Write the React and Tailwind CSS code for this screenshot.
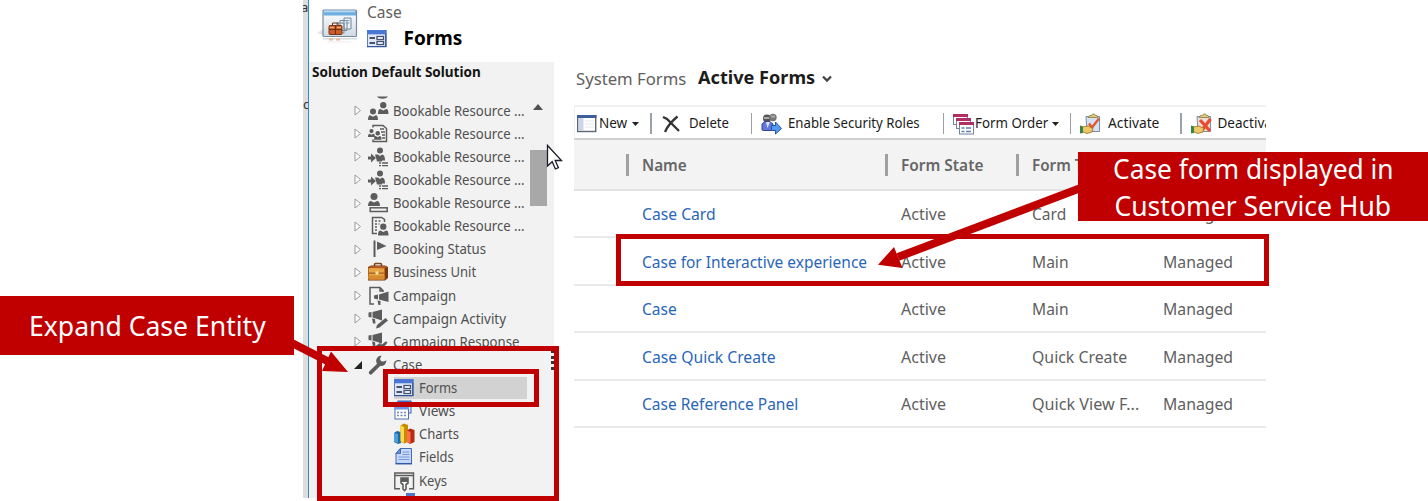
import React, { useLayoutEffect, useRef, useState } from "react";

// Text run stretched to an exact measured width.
function Fit({ w, className = "", children }) {
  const ref = useRef(null);
  const [s, setS] = useState(1);
  useLayoutEffect(() => {
    const n = ref.current.offsetWidth;
    if (n) setS(w / n);
  }, [w]);
  return (
    <span className={"block shrink-0 whitespace-nowrap " + className} style={{ width: w }}>
      <span ref={ref} className="inline-block origin-left" style={{ transform: `scaleX(${s})` }}>
        {children}
      </span>
    </span>
  );
}

const G = "#5c5c5c";

function Person({ x, y, k = 1 }) {
  return (
    <g transform={`translate(${x} ${y}) scale(${k})`} fill={G}>
      <circle cx="5" cy="3" r="3" />
      <path d="M0 11.500c0-3 .7-4.800 2.200-4.800L5 8.200l2.800-1.500C9.300 6.700 10 8.500 10 11.500z" />
    </g>
  );
}

function Svg({ children, w = 20, h = 20 }) {
  return (
    <svg width={w} height={h} viewBox={`0 0 ${w} ${h}`} className="shrink-0 overflow-visible">
      {children}
    </svg>
  );
}

const People = () => (
  <Svg>
    <path d="M9-4.500h11c-2 3-9 3-11 0z" fill={G} />
    <Person x={0} y={7.500} k={1} />
    <Person x={10} y={1} k={1.050} />
  </Svg>
);
const PeopleDoc = () => (
  <Svg>
    <path d="M5 3.500V1.500h10l3.500 3v13H5v-2" fill="none" stroke={G} strokeWidth="1.500" />
    <path d="M12 5h4M13 8h4M14 11h3M14 14h3" stroke={G} strokeWidth="1.300" />
    <Person x={0} y={5} k={0.7} />
    <Person x={6} y={7} k={0.75} />
  </Svg>
);
const PersonArrow = () => (
  <Svg>
    <path d="M0 9.500h3v-3l5 4.500-5 4.500v-3H0z" fill={G} />
    <circle cx="12" cy="3.500" r="3" fill={G} />
    <path d="M7 7.500h3l2 1.500L14 7.500c2 0 3 2 3 6h-3v1H9z" fill={G} />
    <path d="M11 16h2m1 0h6M11 18.700h2m1 0h6" stroke={G} strokeWidth="1.300" />
  </Svg>
);
const PersonBox = () => (
  <Svg>
    <circle cx="6" cy="3.500" r="3.500" fill={G} />
    <path d="M0 13c0-3 1-5 3-5L6 9.500 9 8c2 0 3 2 3 5z" fill={G} />
    <rect x="2.200" y="14.800" width="17" height="3.700" fill="none" stroke={G} strokeWidth="1.500" />
  </Svg>
);
const BuildingPerson = () => (
  <Svg>
    <path d="M9 17.500H4.500V1.500h9l3 2V6" fill="none" stroke={G} strokeWidth="1.500" />
    <path d="M7 5h2m1.500 0h2M7 8h2m1.500 0h1M7 11h2M7 14h2" stroke={G} strokeWidth="1.500" />
    <Person x={10} y={7.500} k={1.050} />
  </Svg>
);
const Flag = () => (
  <Svg>
    <path d="M6.500 1.500v16.500" stroke={G} strokeWidth="2" />
    <path d="M9 2.500l9.500 4.500L9 11z" fill={G} />
  </Svg>
);
const Briefcase = () => (
  <Svg>
    <path d="M6.500 5V2.500q0-1 1-1h5q1 0 1 1V5" fill="none" stroke="#7a4318" strokeWidth="1.600" />
    <path d="M0 5l3-1.500h14L20 5v11l-3 2.500H0z" fill="#7c3711" />
    <path d="M.5 6h16v11.500H.5z" fill="#e7a344" />
    <path d="M0 5.500l3-1.500h14l2.500 1-3 1.500z" fill="#b45a20" />
    <path d="M.5 10.500h16v1.300H.5z" fill="#a85e1c" />
    <path d="M.5 13.500h16v4H.5z" fill="#d88a31" />
    <path d="M7.500 9.500h3v3h-3z" fill="#fbe3a0" />
  </Svg>
);
const Campaign = () => (
  <Svg>
    <path d="M6 18H2V1.500h10l3 3V6M12 1.500V5h3" fill="none" stroke={G} strokeWidth="1.500" />
    <path d="M6 9.500l4-1v5l-4-1zM11 8.500l9.500-3v10.500L11 13.500z" fill={G} />
    <path d="M9.500 14.500l3 .5v4h-2z" fill={G} />
  </Svg>
);
const Horn = ({ pencil }) => (
  <Svg>
    <path d="M.5 3.500L3.500 3v5.500l-3-.5zM4.500 3L14 .5v11L4.500 8.500z" fill={G} />
    <path d="M4 9.500l3 .5.5 4.500H5z" fill={G} />
    {pencil ? (
      <path d="M8 19.500l1-3.500 8.500-7L20 11.500l-8.500 7z" fill={G} />
    ) : (
      <path d="M19.500 10q-2 5-7 6v2.500L7 14.500l5.500-4v2q3-.5 5-3z" fill={G} />
    )}
  </Svg>
);
const Wrench = () => (
  <Svg>
    <path d="M2.700 17.700L12 8.500" stroke={G} strokeWidth="3.800" strokeLinecap="round" />
    <path d="M18.300 5.300A5.100 5.100 0 1 1 13.700.8L11.900 3.700l1.200 2.600 2.900.3z" fill={G} />
  </Svg>
);
const FormsIcon = () => (
  <Svg>
    <rect x=".5" y="1.500" width="18.500" height="16" fill="#dfe7f6" stroke="#5b7dbd" />
    <rect x="0" y="1" width="19.500" height="4.300" fill="#4a76d4" />
    <path d="M18.800 5v13M0 17.600h19.500" stroke="#34559a" strokeWidth="1.400" />
    <path d="M2.500 9h5.500M2.500 14h5.500" stroke="#42536f" strokeWidth="1.800" />
    <rect x="10" y="7.500" width="6.500" height="3" fill="#fff" stroke="#42536f" strokeWidth="1.300" />
    <rect x="10" y="12.500" width="6.500" height="3" fill="#fff" stroke="#42536f" strokeWidth="1.300" />
  </Svg>
);
const ViewsIcon = () => (
  <Svg>
    <rect x="4" y="0" width="13" height="12" fill="#dce8fb" stroke="#3f66b3" />
    <path d="M3.500 0h14v4h-14z" fill="#3f6fd2" />
    <rect x="1" y="5.500" width="13.500" height="12.500" fill="#fff" stroke="#4c70b5" />
    <path d="M.5 5h14.500v3.500H.5z" fill="#6e98e5" />
    <path d="M3 11.500h2m1.500 0h2m1.500 0h2M3 14.500h2m1.500 0h2m1.500 0h2" stroke="#6f86b5" strokeWidth="1.500" />
  </Svg>
);
const ChartsIcon = () => (
  <Svg>
    <path d="M0 9l3-2 4 1v11l-3 1-4-2z" fill="#1d69ac" />
    <path d="M0 9l4 1v9l-4-1.500z" fill="#4ba0df" />
    <path d="M6.500 1.500L10-.5l4 1.500v17l-4 1.500-3.500-2z" fill="#c78b06" />
    <path d="M6.500 1.500L10 3v16l-3.500-2z" fill="#ffdc45" />
    <path d="M13 6.500l3-2 4.500 1.500v12L16 20l-3-2z" fill="#b72a13" />
    <path d="M13 6.500L16.500 8v11.500L13 18z" fill="#ff704b" />
  </Svg>
);
const FieldsIcon = () => (
  <Svg>
    <path d="M6 1.500h11.500v15H2v-10z" fill="#c8d9f8" stroke="#426ab9" />
    <path d="M6.500 1.500v5H2z" fill="#6e94dc" stroke="#426ab9" />
    <path d="M8.500 5h7M8.500 7.500h7M4.500 10h11M4.500 12.500h11" stroke="#7898d8" />
    <path d="M1.500 16.700h16.500" stroke="#315ba9" strokeWidth="1.500" />
  </Svg>
);
const KeysIcon = () => (
  <Svg>
    <path d="M6 17.800H.8V2h18.700v15.800H15M.8 4.500h18.700" fill="none" stroke={G} strokeWidth="1.400" />
    <path d="M7 7h7v5l-2 1.500v4.500l-1.500 1.500L9 18v-4.500L7 12z" fill="#fff" stroke={G} strokeWidth="1.600" />
    <path d="M7 7h7v4H7z" fill={G} />
  </Svg>
);

const tree = [
  ["Bookable Resource ...", 132, People],
  ["Bookable Resource ...", 132, PeopleDoc],
  ["Bookable Resource ...", 132, PersonArrow],
  ["Bookable Resource ...", 132, PersonArrow],
  ["Bookable Resource ...", 132, PersonBox],
  ["Bookable Resource ...", 132, BuildingPerson],
  ["Booking Status", 93, Flag],
  ["Business Unit", 83, Briefcase],
  ["Campaign", 63, Campaign],
  ["Campaign Activity", 113, () => <Horn pencil />],
  ["Campaign Response", 126, () => <Horn />],
];
const children = [
  ["Forms", 38, FormsIcon],
  ["Views", 36, ViewsIcon],
  ["Charts", 40, ChartsIcon],
  ["Fields", 35, FieldsIcon],
  ["Keys", 28, KeysIcon],
];
const rows = [
  ["Case Card", 73.5, "Card", 34],
  ["Case for Interactive experience", 225.5, "Main", 37],
  ["Case", 35, "Main", 37],
  ["Case Quick Create", 133.5, "Quick Create", 95],
  ["Case Reference Panel", 156, "Quick View F...", 107],
];

function CaseIcon() {
  return (
    <Svg w={42} h={36}>
      <defs>
        <linearGradient id="win" x1="0" y1="0" x2="0" y2="1">
          <stop offset="0" stopColor="#fff" />
          <stop offset="1" stopColor="#cfdae5" />
        </linearGradient>
      </defs>
      <path d="M0 25l6-4v6z" fill="#e4e4e4" />
      <rect x="6" y="2" width="33.500" height="26.500" rx="1" fill="url(#win)" stroke="#788b9c" strokeWidth="1.200" />
      <path d="M6.500 2.500h32.500v5H6.500z" fill="#6faee0" />
      <path d="M7 3.500h31" stroke="#b5daf5" strokeWidth="1.500" />
      <path d="M20 15h7v10h-7zM23 12.500h7v10h-7zM27 10h7v11h-7z" fill="#eaf1f7" stroke="#718799" />
      <path d="M28.500 12.500h4M28.500 15h4M24.500 15h2M21.500 18h3" stroke="#8ba0b3" />
      <rect x="12" y="17.500" width="13" height="9" rx="1" fill="#c95d2a" stroke="#813311" />
      <path d="M15.500 17v-2h5.500v2M12 21.500h13M18.500 18v8" stroke="#6f2c10" fill="none" />
      <path d="M13 19.500h4m3 0h4" stroke="#f1a373" strokeWidth="1.500" />
      <path d="M6 30h34v1.500H6z" fill="#d7dde2" />
      <path d="M12 31.500h4m3 0h4" stroke="#e9b89e" strokeWidth="2" />
      <path d="M10 34h24" stroke="#f6f6f6" strokeWidth="2" />
    </Svg>
  );
}
const NewIcon = () => (
  <Svg>
    <rect x=".7" y="2" width="18" height="15.500" fill="#fff" stroke="#5d6676" strokeWidth="1.400" />
    <path d="M0 1h19.500v3H0z" fill="#3d5f9d" />
    <path d="M1.500 4h5v13h-5z" fill="#cbd6ec" />
    <path d="M8 7h9M8 10h9M8 13h9" stroke="#e4e7ee" />
  </Svg>
);
const RolesIcon = () => (
  <Svg>
    <circle cx="6" cy="4.500" r="4" fill="#555" />
    <circle cx="12" cy="3.500" r="3.700" fill="#777" />
    <path d="M3 4h5M10 2.500h4" stroke="#aaa" strokeWidth="2" />
    <path d="M1 16V10l3-2.500h4.500L12 10l-1 6.500H3z" fill="#6578db" stroke="#343f93" />
    <path d="M5 8l1.500 6L9 8z" fill="#dce5fc" />
    <path d="M10.500 11.500h4v-3.500l6 6.500-6 5.500v-3.500h-4z" fill="#5598ed" stroke="#1d55ad" />
  </Svg>
);
const OrderIcon = () => (
  <Svg>
    {[[0, 0], [3, 4], [6, 8]].map(([x, y]) => (
      <g key={x} transform={`translate(${x} ${y})`}>
        <rect x=".5" y=".5" width="14" height={x === 6 ? 11.5 : 10} fill="#fff" stroke="#7484a0" />
        <path d="M0 0h15v3H0z" fill="#b02f64" />
      </g>
    ))}
    <path d="M8.500 14h3m1.500 0h5M8.500 17.500h3m1.500 0h5" stroke="#637fb0" strokeWidth="1.600" />
  </Svg>
);
const Clip = ({ off }) => (
  <Svg>
    <path d="M6 2.500h13.500v15H7z" fill={off ? "#eadfd0" : "#d5e2f5"} stroke="#7c8da8" />
    <path d="M8 3.500l1.500-2h2l1-1.500h2l1 1.500h1.500l1 2z" fill="#dcc880" stroke="#8d7a3e" strokeWidth=".8" />
    {off ? (
      <path d="M9 6l10 11M19.500 5L10 17.500" stroke="#e84b31" strokeWidth="3.200" />
    ) : (
      <path d="M9 9.500l3 4 7-9" fill="none" stroke="#e4572b" strokeWidth="2.300" />
    )}
    <path d="M2 13l6-1 5 2.500-1 3.500-5 1.500-5-2z" fill="#eec76a" stroke="#9a6d1c" strokeWidth=".8" />
    <path d="M0 11.500l3 1v6.500l-3 .5z" fill="#3a8445" />
  </Svg>
);
const Caret = () => (
  <svg width="7" height="4" className="shrink-0"><path d="M0 0h7L3.500 4z" fill="#222" /></svg>
);

function Twisty() {
  return (
    <svg width="8" height="11" className="mr-[6px] shrink-0">
      <path d="M1 1l5.500 4.500L1 10z" fill="#fff" stroke="#999" />
    </svg>
  );
}

function Sidebar() {
  return (
    <aside className="flex h-[436px] w-[245px] flex-col overflow-hidden bg-[#f2f2f2]">
      <Fit w={169} className="h-[33px] pl-[2.500px] text-[14px] leading-[20px] font-bold text-[#151515]">
        Solution Default Solution
      </Fit>
      <div className="flex h-[403px] overflow-hidden">
        <div className="w-[220px] shrink-0 pt-[4px] text-[14px] leading-[23px] text-[#505050]">
          {tree.map(([t, w, Icon], i) => (
            <div key={i} className="flex h-[23.130px] items-center pl-[44.500px]">
              <Twisty />
              <div className="mr-[5px] flex w-[20px]"><Icon /></div>
              <Fit w={w} className="mt-[-1px]">{t}</Fit>
            </div>
          ))}
          <div className="flex h-[23.130px] items-center pl-[44.500px]">
            <svg width="8" height="8" className="mr-[6px] shrink-0"><path d="M8 0v8H0z" fill="#222" /></svg>
            <div className="mr-[5px] flex w-[20px]"><Wrench /></div>
            <Fit w={29} className="mt-[-1px]">Case</Fit>
          </div>
          {children.map(([t, w, Icon], i) => (
            <div key={t} className="flex h-[23.130px] items-center pl-[84.500px]">
              <div className={"flex h-[22px] w-[133px] items-center gap-[5px] " + (i === 0 ? "bg-[#d2d2d2]" : "")}>
                <Icon />
                <Fit w={w} className="mt-[-1px]">{t}</Fit>
              </div>
            </div>
          ))}
          <div className="pl-[97px]">
            <div className="mt-px h-[6px] w-[9px] bg-[#4f78c8]" />
          </div>
        </div>
        <div className="flex w-[18px] flex-col items-center pt-[9px]">
          <svg width="10" height="6"><path d="M5 0l5 6H0z" fill="#505050" /></svg>
          <div className="mt-[40px] h-[56px] w-[17px] bg-[#a8a8a8]" />
        </div>
      </div>
    </aside>
  );
}

const Sep = ({ className }) => <div className={"h-[21px] w-[1.500px] shrink-0 bg-[#9aa0aa] " + className} />;

function Grid() {
  return (
    <main className="w-[692px] overflow-hidden">
      <div className="flex h-[43px] items-center pl-[2px]">
        <Fit w={110} className="mt-[-10px] text-[17px] text-[#606060]">System Forms</Fit>
        <Fit w={117} className="mt-[-13px] ml-[12px] text-[17.500px] font-bold text-[#1c1c1c]">Active Forms</Fit>
        <svg width="10" height="8" className="mt-[-10px] ml-[7px]"><path d="M1 1.500l4 4 4-4" fill="none" stroke="#444" strokeWidth="2.300" /></svg>
      </div>
      <div className="flex h-[35px] items-center border-t-2 border-b-2 border-l border-t-[#f0f0f0] border-b-[#cfcfcf] border-l-[#eee] pt-[2px] pl-[2px] text-[13.500px] text-[#1b1b1b]">
        <NewIcon />
        <Fit w={28} className="mr-[5px] ml-[2px]">New</Fit>
        <Caret />
        <Sep className="ml-[11px]" />
        <svg width="18" height="18" className="ml-[10.500px] shrink-0"><path d="M1 2l4 2 12 12M15.500 1.500C10 6 5 12 3 17" fill="none" stroke="#333" strokeWidth="2.300" /></svg>
        <Fit w={40} className="ml-[8.500px]">Delete</Fit>
        <Sep className="ml-[22px]" />
        <div className="ml-[8.500px] flex"><RolesIcon /></div>
        <Fit w={132} className="ml-[7.500px]">Enable Security Roles</Fit>
        <Sep className="ml-[22.500px]" />
        <div className="ml-[8.500px] flex"><OrderIcon /></div>
        <Fit w={73} className="mr-[4px] ml-[2px]">Form Order</Fit>
        <Caret />
        <Sep className="ml-[11px]" />
        <div className="ml-[9px] flex"><Clip /></div>
        <Fit w={51} className="ml-[7.500px]">Activate</Fit>
        <Sep className="ml-[21.500px]" />
        <div className="ml-[9px] flex"><Clip off /></div>
        <Fit w={67} className="ml-[7px]">Deactivate</Fit>
      </div>
      <div className="flex h-[50.500px] items-center border-b-2 border-[#e3e3e3] bg-[#f3f3f3] pt-[2px] pl-[52px] text-[16px] font-semibold text-[#666]">
        <div className="h-[22px] w-[2.500px] bg-[#a0a0a0]" />
        <Fit w={45} className="ml-[13px]">Name</Fit>
        <div className="ml-[198.500px] h-[22px] w-[2.500px] bg-[#a0a0a0]" />
        <Fit w={82} className="ml-[13px]">Form State</Fit>
        <div className="ml-[33.500px] h-[22px] w-[2.500px] bg-[#a0a0a0]" />
        <Fit w={78} className="ml-[13px]">Form Type</Fit>
      </div>
      {rows.map(([name, w, type, tw]) => (
        <div key={name} className="flex h-[47.500px] items-center border-b-2 border-[#eaeaea] pt-[1.500px] pl-[67.500px] text-[16px] text-[#606060]">
          <div className="w-[259.500px] text-[#2a66b8]"><Fit w={w}>{name}</Fit></div>
          <div className="w-[130.500px]"><Fit w={45}>Active</Fit></div>
          <div className="w-[131px]"><Fit w={tw}>{type}</Fit></div>
          <Fit w={70}>Managed</Fit>
        </div>
      ))}
    </main>
  );
}

export default function App() {
  return (
    <div className="relative h-[501px] w-[1428px] overflow-hidden bg-white font-['Noto_Sans','Open_Sans',sans-serif]">
      <div className="flex h-[498px] pl-[303px]">
        <div className="flex w-[5px] shrink-0 flex-col overflow-hidden bg-[#dedede] text-[13px] leading-[14px] text-[#333]">
          <span className="-ml-[2px] h-[97px]">a</span>
          <span>c</span>
        </div>
        <div className="w-px shrink-0 bg-[#2f8ad6]" />
        <div className="flex flex-col">
          <header className="flex h-[62px] pl-[8px]">
            <div className="pt-[8px]"><CaseIcon /></div>
            <div className="ml-[7.500px] flex flex-col">
              <Fit w={35} className="h-[28px] text-[16px] leading-[25px] text-[#606060]">Case</Fit>
              <div className="flex h-[22px] items-center">
                <FormsIcon />
                <Fit w={59} className="mt-[-2px] ml-[17px] text-[19px] leading-[20px] font-bold text-black">Forms</Fit>
              </div>
            </div>
          </header>
          <div className="flex">
            <Sidebar />
            <div className="w-[20px] shrink-0" />
            <Grid />
          </div>
        </div>
      </div>

      <div className="absolute top-[350px] left-[551px] flex flex-col gap-[2.500px]">
        {[0, 1, 2, 3].map((i) => <i key={i} className="block h-[3px] w-[3px] bg-[#333]" />)}
      </div>
      <div className="absolute top-[346px] left-[317px] h-[155px] w-[242px] border-[5px] border-[#c00000]" />
      <div className="absolute top-[369px] left-[383px] h-[38px] w-[156px] border-[5px] border-[#c00000]" />
      <div className="absolute top-[234px] left-[616px] h-[52px] w-[653px] border-[5px] border-[#c00000]" />
      <svg className="absolute top-0 left-0" width="1428" height="501">
        <path d="M290 342L334 364.500M1082 187.500L898 257" stroke="#c00000" strokeWidth="8" />
        <path d="M348 372l-17-20.500-9 19.500zM878 264.700l16-17.700 8.500 21z" fill="#c00000" />
        <path d="M547.500 145.500v20.500l4.700-4.300 3.200 7.300 3-1.300-3.200-7.200h6.300z" fill="#fff" stroke="#1c1c2c" strokeWidth="1.300" />
      </svg>
      <div className="absolute top-[296px] left-0 flex h-[59px] w-[294px] items-center bg-[#c00000] pt-[2px] pl-[29px] text-[26.500px] leading-[37px] text-white">
        <Fit w={236.5}>Expand Case Entity</Fit>
      </div>
      <div className="absolute top-[152px] left-[1078px] flex h-[69px] w-[350px] flex-col items-center justify-center bg-[#c00000] pt-[2px] text-[26.500px] leading-[37px] text-white">
        <Fit w={281}>Case form displayed in</Fit>
        <Fit w={277}>Customer Service Hub</Fit>
      </div>
    </div>
  );
}
